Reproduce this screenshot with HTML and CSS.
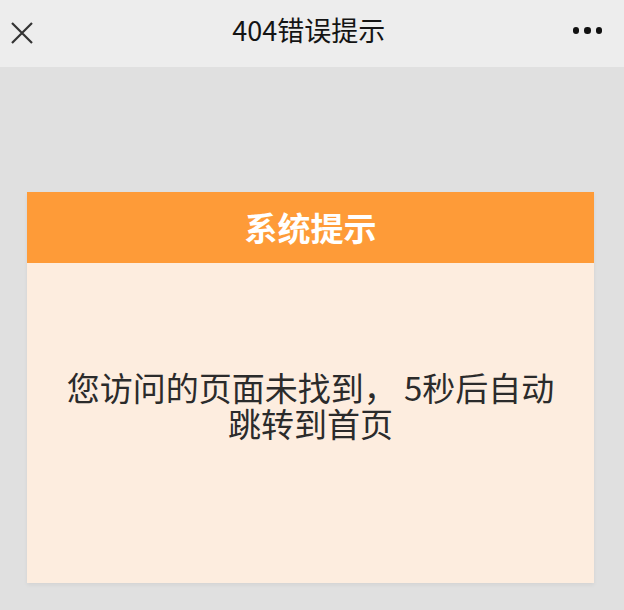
FILE: index.html
```html
<!DOCTYPE html>
<html lang="zh-CN">
<head>
<meta charset="utf-8">
<title>404错误提示</title>
<link rel="stylesheet" href="styles.css">
</head>
<body>
<header class="nav">
  <span class="nav-close">
    <svg width="22" height="22" viewBox="0 0 22 22"><path d="M1 1L21 21M21 1L1 21" stroke="#333" stroke-width="2.2" fill="none"/></svg>
  </span>
  <span class="nav-title">404错误提示</span>
  <span class="nav-more"><i></i><i></i><i></i></span>
</header>
<main class="page">
  <section class="card">
    <div class="card-head">系统提示</div>
    <div class="card-body">
      <p class="msg">您访问的页面未找到， 5秒后自动跳转到首页</p>
    </div>
  </section>
</main>
</body>
</html>
```
FILE: styles.css
```css
* { box-sizing: border-box; }
html, body {
  margin: 0;
  padding: 0;
  background: #e0e0e0;
  font-family: "Noto Sans CJK SC", "Noto Sans", sans-serif;
}
body { height: 610px; overflow: hidden; }
.nav {
  height: 67px;
  background: #ededed;
  display: flex;
  align-items: center;
  justify-content: space-between;
  padding: 0 22px 0 11px;
}
.nav-close { display: flex; width: 22px; height: 22px; margin-top: -1px; }
.nav-title {
  font-size: 27px;
  font-weight: normal;
  color: #141414;
  line-height: 1;
  margin-left: 12px;
  margin-top: -8px;
}
.nav-more { display: flex; gap: 5px; margin-top: -6px; }
.nav-more i {
  display: block;
  width: 6.5px;
  height: 6.5px;
  border-radius: 50%;
  background: #111;
}
.page { padding: 125px 30px 0 27px; }
.card {
  width: 567px;
  box-shadow: 0 2px 4px rgba(0,0,0,0.06);
}
.card-head {
  height: 71px;
  background: #fe9b38;
  color: #fff;
  font-size: 33px;
  font-weight: bold;
  text-align: center;
  line-height: 71px;
}
.card-body {
  height: 320px;
  background: #fdeddf;
  padding: 106px 28px 0;
}
.msg {
  margin: 0;
  font-size: 33px;
  font-weight: normal;
  line-height: 36px;
  color: #2b2b2b;
  text-align: center;
}
```
